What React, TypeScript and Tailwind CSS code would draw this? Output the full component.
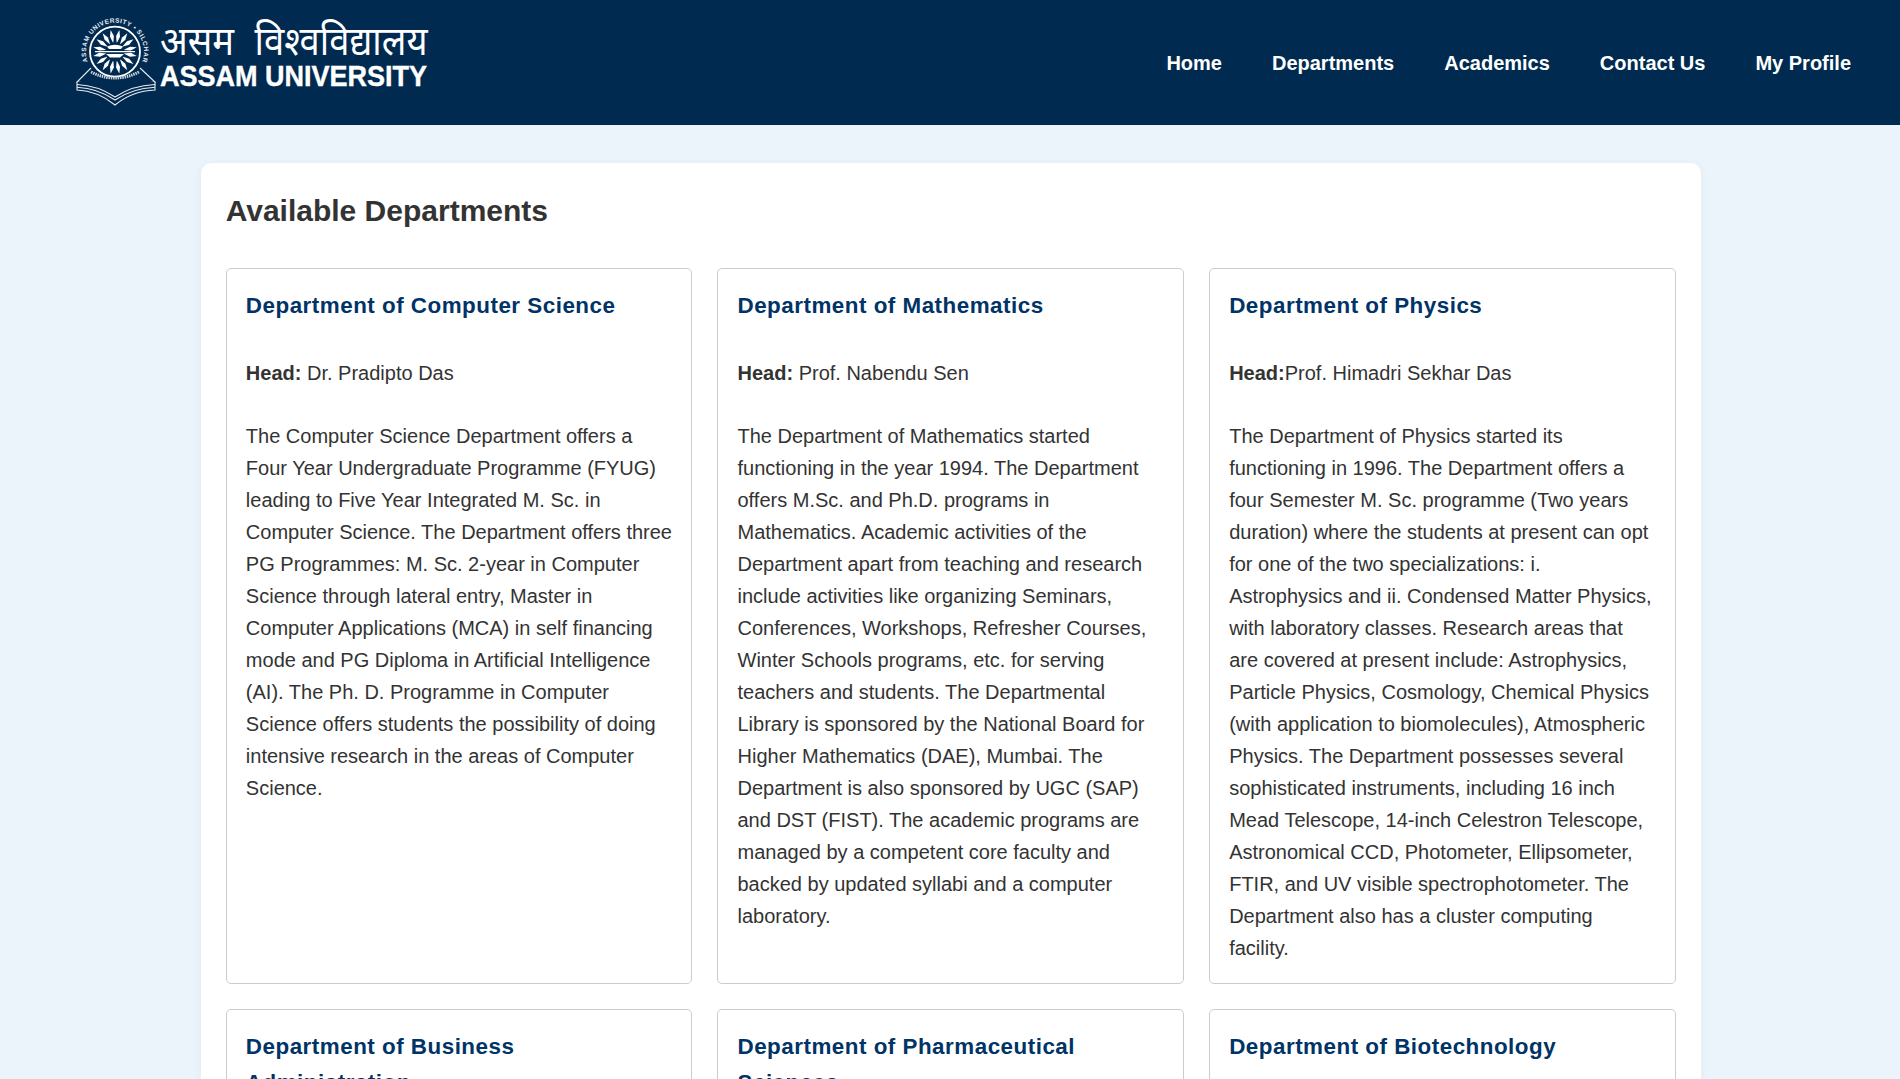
const departments = [
  {
    name: "Department of Computer Science",
    head: " Dr. Pradipto Das",
    text: "The Computer Science Department offers a Four Year Undergraduate Programme (FYUG) leading to Five Year Integrated M. Sc. in Computer Science. The Department offers three PG Programmes: M. Sc. 2-year in Computer Science through lateral entry, Master in Computer Applications (MCA) in self financing mode and PG Diploma in Artificial Intelligence (AI). The Ph. D. Programme in Computer Science offers students the possibility of doing intensive research in the areas of Computer Science.",
  },
  {
    name: "Department of Mathematics",
    head: " Prof. Nabendu Sen",
    text: "The Department of Mathematics started functioning in the year 1994. The Department offers M.Sc. and Ph.D. programs in Mathematics. Academic activities of the Department apart from teaching and research include activities like organizing Seminars, Conferences, Workshops, Refresher Courses, Winter Schools programs, etc. for serving teachers and students. The Departmental Library is sponsored by the National Board for Higher Mathematics (DAE), Mumbai. The Department is also sponsored by UGC (SAP) and DST (FIST). The academic programs are managed by a competent core faculty and backed by updated syllabi and a computer laboratory.",
  },
  {
    name: "Department of Physics",
    head: "Prof. Himadri Sekhar Das",
    text: "The Department of Physics started its functioning in 1996. The Department offers a four Semester M. Sc. programme (Two years duration) where the students at present can opt for one of the two specializations: i. Astrophysics and ii. Condensed Matter Physics, with laboratory classes. Research areas that are covered at present include: Astrophysics, Particle Physics, Cosmology, Chemical Physics (with application to biomolecules), Atmospheric Physics. The Department possesses several sophisticated instruments, including 16 inch Mead Telescope, 14-inch Celestron Telescope, Astronomical CCD, Photometer, Ellipsometer, FTIR, and UV visible spectrophotometer. The Department also has a cluster computing facility.",
  },
  { name: "Department of Business Administration", head: "", text: "" },
  { name: "Department of Pharmaceutical Sciences", head: "", text: "" },
  { name: "Department of Biotechnology", head: "", text: "" },
]

const navLinks = ["Home", "Departments", "Academics", "Contact Us", "My Profile"]

function Emblem() {
  const rays = Array.from({ length: 16 }, (_, i) => (i * 360) / 16 + 11.25)
  return (
    <svg viewBox="0 0 90 100" className="w-[90px] h-[100px] shrink-0">
      <defs>
        <path id="ring-text" d="M17.75 51.6 A29 29 0 1 1 72.25 51.6" />
      </defs>
      <text fontSize="6.4" fontWeight="700" fill="#e8edf2" fontFamily="Liberation Sans, sans-serif">
        <textPath href="#ring-text" textLength="111" lengthAdjust="spacing">
          ASSAM UNIVERSITY • SILCHAR
        </textPath>
      </text>
      <circle cx="45" cy="41.7" r="25" fill="none" stroke="#fff" strokeWidth="1.8" />
      {rays.map((a) => (
        <path key={a} d="M45 19.5 L47 26 L45 33 L43 26 Z" fill="#fff" transform={`rotate(${a} 45 41.7)`} />
      ))}
      <circle cx="45" cy="41.7" r="9.5" fill="#002a50" />
      <path d="M25 41.7 H65" stroke="#fff" strokeWidth="1.2" />
      <path d="M37 36.5 Q45 33 53 36.5 L51 39 H39 Z" fill="#fff" />
      <path d="M36 44 H54 L50 47.5 H40 Z" fill="#fff" />
      <path d="M21 62 Q45 74 69 62" fill="none" stroke="#c9d3dd" strokeWidth="3" strokeDasharray="1.5 0.8" />
      <path d="M21 58 L7 72 Q28 73 45 84 Q62 73 85 72 L70 58" fill="none" stroke="#e8edf2" strokeWidth="1.1" />
      <path d="M7 72 V80 Q28 81 45 95 Q62 81 85 80 V72" fill="#002a50" stroke="#e8edf2" strokeWidth="1.1" />
      <path d="M7 74.5 Q28 75.5 45 87 Q62 75.5 85 74.5 M7 77.2 Q28 78.2 45 90 Q62 78.2 85 77.2" fill="none" stroke="#e8edf2" strokeWidth="1.1" />
    </svg>
  )
}

function Logo() {
  return (
    <div className="flex items-start text-white">
      <Emblem />
      <div>
        <div className="h-[50px] origin-left scale-x-[0.92] whitespace-nowrap font-['Noto_Sans','DejaVu_Sans',sans-serif] text-[39.5px] leading-[60px] [word-spacing:12px]">
          असम विश्वविद्यालय
        </div>
        <div className="origin-left scale-x-[0.9] whitespace-nowrap text-[30px] font-bold leading-[32px] [-webkit-text-stroke:0.4px_white]">ASSAM UNIVERSITY</div>
      </div>
    </div>
  )
}

export default function App() {
  return (
    <div className="h-[1079px] overflow-hidden bg-[#ebf3fb] font-['Liberation_Sans',sans-serif] text-[#333333]">
      <header className="h-[125px] bg-[#002a50] flex items-start justify-between pl-[70px] pr-[49px]">
        <div className="pt-[10px]">
          <Logo />
        </div>
        <nav className="flex gap-[50px] pt-[51px]">
          {navLinks.map((link) => (
            <a key={link} href="#" className="text-white font-bold text-[20px] leading-[24px]">
              {link}
            </a>
          ))}
        </nav>
      </header>
      <main className="ml-[200.67px] mt-[38px] w-[1500px] rounded-[10px] bg-white p-[25px] shadow-[0_2px_10px_rgba(0,0,0,0.05)]">
        <h2 className="text-[30px] leading-[48px] font-bold mb-[33px] mt-[-1px]">Available Departments</h2>
        <div className="grid grid-cols-3 gap-[25px]">
          {departments.map((dept) => (
            <div key={dept.name} className="rounded-[5px] border border-[#cccccc] p-[19.2px] text-[20px] leading-[32px]">
              <h3 className="text-[22.4px] leading-[35.84px] tracking-[0.5px] font-bold text-[#003366] mb-[33px]">{dept.name}</h3>
              {dept.head !== "" && (
                <p className="mb-[30.6px]">
                  <strong>Head:</strong>
                  {dept.head}
                </p>
              )}
              <p>{dept.text}</p>
            </div>
          ))}
        </div>
      </main>
    </div>
  )
}
